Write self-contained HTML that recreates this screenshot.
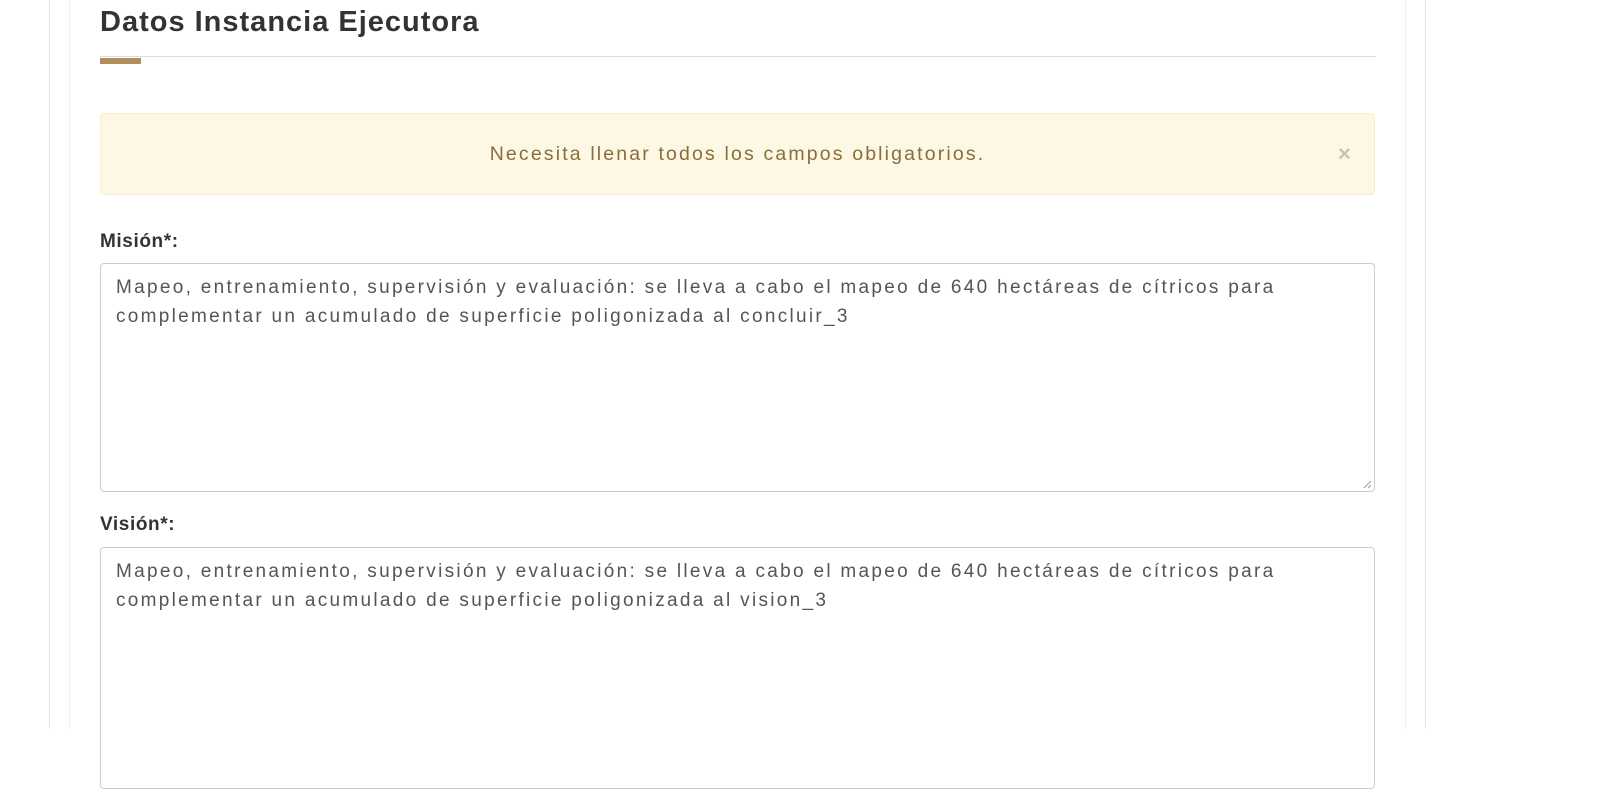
<!DOCTYPE html>
<html><head><meta charset="utf-8"><style>
body{margin:0;width:1622px;height:729px;background:#fff;position:relative;overflow:hidden;font-family:"Liberation Sans",sans-serif;}
.v{position:absolute;top:0;bottom:0;width:1px;background:#e3e3e3}
.abs{position:absolute}
h1{position:absolute;left:100px;top:6px;margin:0;font-size:29px;font-weight:bold;color:#333;letter-spacing:1px}
.alert{left:100px;top:113px;width:1273px;height:80px;background:#fcf8e3;border:1px solid #faebcc;border-radius:4px}
.alert span{position:absolute;left:0;right:0;top:29px;text-align:center;color:#8a6d3b;font-size:19.5px;letter-spacing:2.15px}
.x{position:absolute;left:1237px;top:27px;font-size:22px;font-weight:bold;color:#c6c3b2}
.lbl{left:100px;font-size:19px;font-weight:bold;color:#333;letter-spacing:0.6px}
.ta{left:100px;width:1273px;border:1px solid #ccc;border-radius:4px;background:#fff}
.ta div{position:absolute;left:15px;top:9px;font-size:19px;line-height:29px;color:#555;letter-spacing:2.3px;white-space:nowrap}
</style></head><body>
<div class="v" style="left:49px"></div>
<div class="v" style="left:69px;background:#eee"></div>
<div class="v" style="left:1405px;background:#eee"></div>
<div class="v" style="left:1425px"></div>
<h1>Datos Instancia Ejecutora</h1>
<div class="abs" style="left:100px;top:56px;width:1276px;height:1px;background:#ddd"></div>
<div class="abs" style="left:100px;top:58px;width:41px;height:6px;background:#b38e5d"></div>
<div class="abs alert"><span>Necesita llenar todos los campos obligatorios.</span><div class="x">×</div></div>
<div class="abs lbl" style="top:231px">Misión*:</div>
<div class="abs ta" style="top:263px;height:227px"><div>Mapeo, entrenamiento, supervisión y evaluación: se lleva a cabo el mapeo de 640 hectáreas de cítricos para<br>complementar un acumulado de superficie poligonizada al concluir_3</div>
<svg class="abs" style="right:2px;bottom:2px;position:absolute" width="10" height="10"><path d="M9 2L2 9M9 6L6 9" stroke="#999" stroke-width="1"/></svg></div>
<div class="abs lbl" style="top:514px">Visión*:</div>
<div class="abs ta" style="top:547px;height:240px"><div>Mapeo, entrenamiento, supervisión y evaluación: se lleva a cabo el mapeo de 640 hectáreas de cítricos para<br>complementar un acumulado de superficie poligonizada al vision_3</div></div>
</body></html>
